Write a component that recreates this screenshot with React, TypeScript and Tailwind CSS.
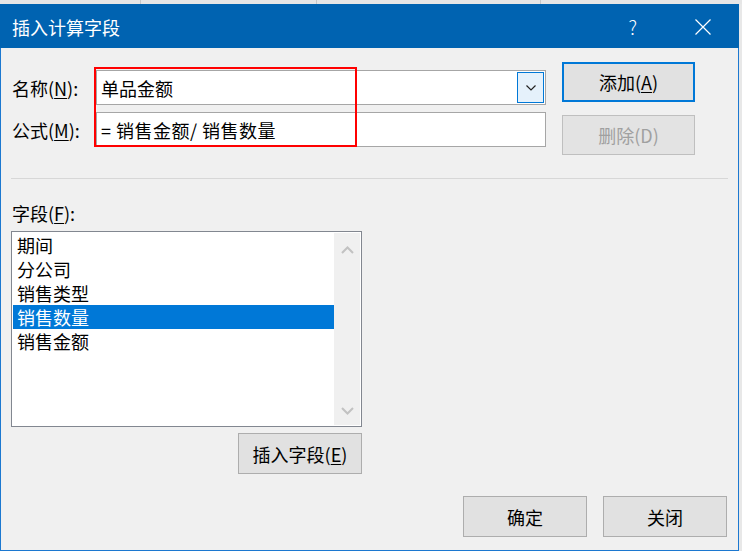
import React from 'react';

const fields = ['期间', '分公司', '销售类型', '销售数量', '销售金额'];

interface BtnProps {
  children: React.ReactNode;
  variant?: 'default' | 'primary' | 'disabled';
  className?: string;
}

const Btn: React.FC<BtnProps> = ({ children, variant = 'default', className = '' }) => {
  const look =
    variant === 'primary'
      ? 'border-2 border-[#0078d7] bg-[#e1e1e1] text-black'
      : variant === 'disabled'
      ? 'border border-[#bfbfbf] bg-[#e3e3e3] text-[#a0a0a0]'
      : 'border border-[#adadad] bg-[#e1e1e1] text-black';
  return (
    <div className={`flex items-center justify-center text-[18px] leading-[24px] ${look} ${className}`}>
      {children}
    </div>
  );
};

const Chevron = ({ up = false }: { up?: boolean }) => (
  <svg width="13" height="8" viewBox="0 0 13 8">
    <path
      d={up ? 'M1 7 L6.5 1.5 L12 7' : 'M1 1 L6.5 6.5 L12 1'}
      fill="none"
      stroke="#c2c2c2"
      strokeWidth="2"
    />
  </svg>
);

export default function App() {
  return (
    <div className="w-[742px] h-[551px] bg-[#e8e8e8] font-['Noto_Sans_CJK_SC',sans-serif] overflow-hidden">
      {/* spreadsheet strip behind the dialog */}
      <div className="h-[4px] flex bg-[#e6e6e6]">
        <div className="w-[141px] border-r border-[#c8c8c8]" />
        <div className="w-[176px] border-r border-[#c8c8c8]" />
        <div className="w-[224px] border-r border-[#c8c8c8]" />
      </div>

      <div className="w-[739px] h-[547px] flex flex-col">
        {/* title bar */}
        <div className="h-[44px] bg-[#0063b1] flex items-center text-white shrink-0">
          <span className="pl-[12px] pt-[2px] text-[18px] leading-[24px]">插入计算字段</span>
          <span className="ml-auto mr-[58px] pt-[2px] text-[19px] leading-[24px] font-light">?</span>
          <svg width="16" height="16" viewBox="0 0 16 16" className="mr-[28px] mt-[1px]">
            <path d="M0.5 0.5 L15.5 15.5 M15.5 0.5 L0.5 15.5" stroke="white" strokeWidth="1.2" />
          </svg>
        </div>

        {/* body */}
        <div className="flex-1 bg-[#f0f0f0] border-l border-r border-b border-[#1c78d0] flex flex-col pl-[10px] pr-[10px]">
          <div className="flex pt-[14px]">
            <div className="relative self-start mt-[8px] grid grid-cols-[85px_450px] gap-y-[7px]">
              <div className="flex items-center text-[18px] leading-[24px] pl-px">
                名称(<u className="underline-offset-2">N</u>):
              </div>
              <div className="h-[35px] bg-white border border-[#a6a6a6] flex items-center pl-[4px] text-[18px] leading-[24px]">
                <span className="flex-1">单品金额</span>
                <div className="w-[27px] h-[31px] mr-px bg-[#e5f1fb] border border-[#0078d7] flex items-center justify-center">
                  <svg width="10" height="6" viewBox="0 0 10 6">
                    <path d="M0.5 0.5 L5 5 L9.5 0.5" fill="none" stroke="#222" strokeWidth="1.2" />
                  </svg>
                </div>
              </div>
              <div className="flex items-center text-[18px] leading-[24px] pl-px">
                公式(<u className="underline-offset-2">M</u>):
              </div>
              <div className="h-[35px] bg-white border border-[#a6a6a6] flex items-center pl-[4px] text-[18px] leading-[24px] tracking-[0.5px]">
                = 销售金额/ 销售数量
              </div>
              <div className="absolute left-[83px] top-[-3px] w-[263px] h-[80px] border-2 border-[#ff0000]" />
            </div>

            <div className="ml-[16px] flex flex-col gap-[13px]">
              <Btn variant="primary" className="w-[133px] h-[40px]">
                添加(<u className="underline-offset-2">A</u>)
              </Btn>
              <Btn variant="disabled" className="w-[133px] h-[40px]">
                删除(D)
              </Btn>
            </div>
          </div>

          <div className="mt-[23px] h-px bg-[#d7d7d7] w-[717px]" />

          <div className="mt-[22px] text-[18px] leading-[24px] pl-px">
            字段(<u className="underline-offset-2">F</u>):
          </div>

          <div className="w-[351px] flex flex-col items-end">
            <div className="mt-[6px] w-[351px] h-[196px] bg-white border border-[#828790] flex p-px">
              <div className="flex-1 flex flex-col">
                {fields.map((f, i) => (
                  <div
                    key={f}
                    className={
                      i === 3
                        ? 'h-[24px] pl-[4px] text-[18px] leading-[24px] bg-[#0078d7] text-white'
                        : 'h-[24px] pl-[4px] text-[18px] leading-[24px] text-black'
                    }
                  >
                    {f}
                  </div>
                ))}
              </div>
              <div className="w-[26px] bg-[#f0f0f0] flex flex-col items-center justify-between pt-[13px] pb-[10px]">
                <Chevron up />
                <Chevron />
              </div>
            </div>

            <Btn className="mt-[6px] w-[124px] h-[41px]">
              插入字段(<u className="underline-offset-2">E</u>)
            </Btn>
          </div>

          <div className="mt-[22px] flex justify-end gap-[16px] pr-px">
            <Btn className="w-[124px] h-[41px]">确定</Btn>
            <Btn className="w-[124px] h-[41px]">关闭</Btn>
          </div>
        </div>
      </div>
    </div>
  );
}
